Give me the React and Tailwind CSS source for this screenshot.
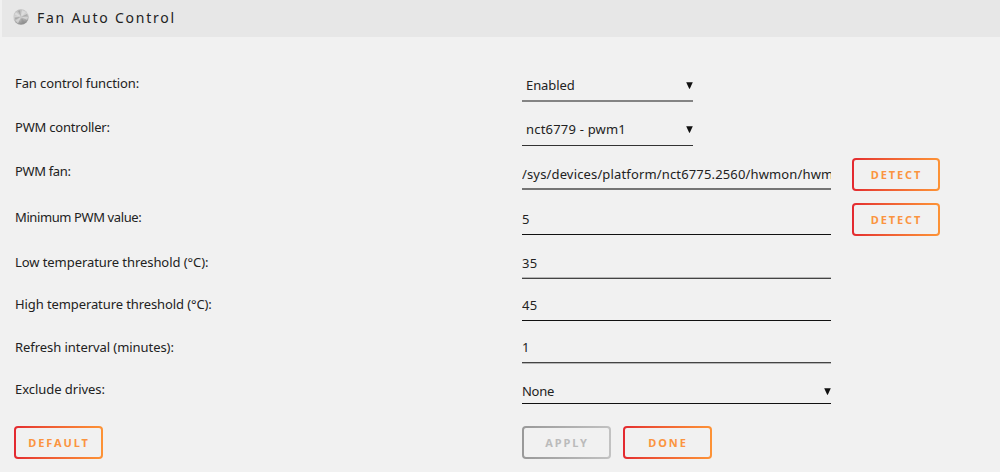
const rows = [
  {
    label: 'Fan control function:',
    value: 'Enabled',
    type: 'select',
    row: 'h-[65px]',
    labelBox: 'pt-[36px] tracking-[-0.1px]',
    box: 'w-[171px] pl-1 pb-[5px] border-b-2 border-[#848484] tracking-[-0.1px]',
  },
  {
    label: 'PWM controller:',
    value: 'nct6779 - pwm1',
    type: 'select',
    row: 'h-[44px]',
    labelBox: 'pt-[15px] tracking-[-0.2px]',
    box: 'w-[171px] pl-1 pb-[6px] border-b border-[#333] tracking-[0.2px]',
  },
  {
    label: 'PWM fan:',
    value: '/sys/devices/platform/nct6775.2560/hwmon/hwmon2/fan2_input',
    type: 'text',
    row: 'h-[44px]',
    labelBox: 'pt-[15px] tracking-[-0.35px]',
    box: 'w-[309px] pb-[4px] border-b-2 border-[#747474] tracking-[0.15px]',
    detect: true,
  },
  {
    label: 'Minimum PWM value:',
    value: '5',
    type: 'text',
    row: 'h-[45px]',
    labelBox: 'pt-[17px] tracking-[-0.4px]',
    box: 'w-[309px] pb-[5px] border-b border-[#111]',
    detect: true,
  },
  {
    label: 'Low temperature threshold (°C):',
    value: '35',
    type: 'text',
    row: 'h-[44px]',
    labelBox: 'pt-[17px] tracking-[-0.07px]',
    box: 'w-[309px] pb-[5px] border-b border-[#444] shadow-[inset_0_-1px_0_#b5b5b5] tracking-[0.4px]',
  },
  {
    label: 'High temperature threshold (°C):',
    value: '45',
    type: 'text',
    row: 'h-[42px]',
    labelBox: 'pt-[15px] tracking-[-0.1px]',
    box: 'w-[309px] pb-[5px] border-b border-[#111] tracking-[0.4px]',
  },
  {
    label: 'Refresh interval (minutes):',
    value: '1',
    type: 'text',
    row: 'h-[42px]',
    labelBox: 'pt-[16px] tracking-[-0.06px]',
    box: 'w-[309px] pb-[5px] border-b border-[#444] shadow-[0_1px_0_#b5b5b5]',
  },
  {
    label: 'Exclude drives:',
    value: 'None',
    type: 'select',
    row: 'h-[41px]',
    labelBox: 'pt-[16px] tracking-[-0.04px]',
    box: 'w-[309px] pb-[2px] border-b border-[#111] tracking-[-0.3px]',
  },
];

function FanIcon() {
  return (
    <svg className="h-4 w-4 shrink-0" viewBox="0 0 16 16">
      <defs>
        <linearGradient id="metal" x1="0" y1="0" x2="0.3" y2="1">
          <stop offset="0" stopColor="#b5b5b5" />
          <stop offset="0.5" stopColor="#d2d2d2" />
          <stop offset="1" stopColor="#929292" />
        </linearGradient>
      </defs>
      <circle cx="8" cy="8" r="7.7" fill="url(#metal)" />
      <path d="M8 8 1.5 5.5 3 3ZM8 8 9 1l4 2ZM8 8l7 0-.8 3ZM8 8 5 14.5l-2.5-3Z" fill="#e6e6e6" opacity="0.6" />
      <path d="M8 8 5 2l2-.8ZM8 8l6-3 .6 1.5ZM8 8 1.5 8.5l.8 2ZM8 8l1 6.8 3-1.2Z" fill="#8e8e8e" opacity="0.5" />
      <circle cx="8" cy="8" r="1.5" fill="#c9c9c9" />
    </svg>
  );
}

function Caret() {
  return (
    <svg className="h-[7px] w-[7px]" viewBox="0 0 7 7">
      <path d="M0.2 0.3h6.6L3.8 6.8h-.6Z" fill="#111" />
    </svg>
  );
}

function Button({ children, disabled = false, width = 'w-[89px]' }) {
  return (
    <button
      disabled={disabled}
      className={`block h-[33px] shrink-0 rounded-[4px] bg-linear-to-r p-[2px] ${width} ${
        disabled
          ? 'from-[#999] to-[#c2c2c2] text-[#bbb]'
          : 'from-[#e32830] to-[#fd9336] text-[#fb9440]'
      }`}
    >
      <span className="flex h-full w-full items-center justify-center rounded-[2px] bg-[#f1f1f1] pl-px text-[11px] leading-none font-bold tracking-[1.9px]">
        {children}
      </span>
    </button>
  );
}

function Field({ item }) {
  return (
    <div className={`flex items-end self-end ${item.box}`}>
      {item.type === 'select' ? (
        <div className="flex w-full items-center justify-between leading-[20px]">
          <span>{item.value}</span>
          <Caret />
        </div>
      ) : (
        <input
          className="h-5 w-full bg-transparent p-0 leading-[20px] outline-none"
          defaultValue={item.value}
        />
      )}
    </div>
  );
}

export default function App() {
  return (
    <div className="h-[472px] w-[1000px] overflow-hidden bg-[#f1f1f1] font-['Noto_Sans',sans-serif] text-[13px] text-[#222]">
      <header className="ml-[2px] flex h-[37px] items-center gap-2 bg-[#e7e7e7] pb-[3px] pl-[11px]">
        <FanIcon />
        <h1 className="text-[14px] tracking-[1.75px]">Fan Auto Control</h1>
      </header>

      <div className="pl-[15px]">
        {rows.map((item) => (
          <div key={item.label} className={`flex ${item.row}`}>
            <label className={`w-[507px] shrink-0 leading-[20px] whitespace-nowrap ${item.labelBox}`}>
              {item.label}
            </label>
            <Field item={item} />
            {item.detect && (
              <div className="-mb-px ml-[21px] self-end">
                <Button width="w-[88px]">DETECT</Button>
              </div>
            )}
          </div>
        ))}
        <div className="mt-[22px] flex">
          <div className="-ml-px w-[508px]">
            <Button>DEFAULT</Button>
          </div>
          <div className="flex gap-3">
            <Button disabled>APPLY</Button>
            <Button>DONE</Button>
          </div>
        </div>
      </div>
    </div>
  );
}
